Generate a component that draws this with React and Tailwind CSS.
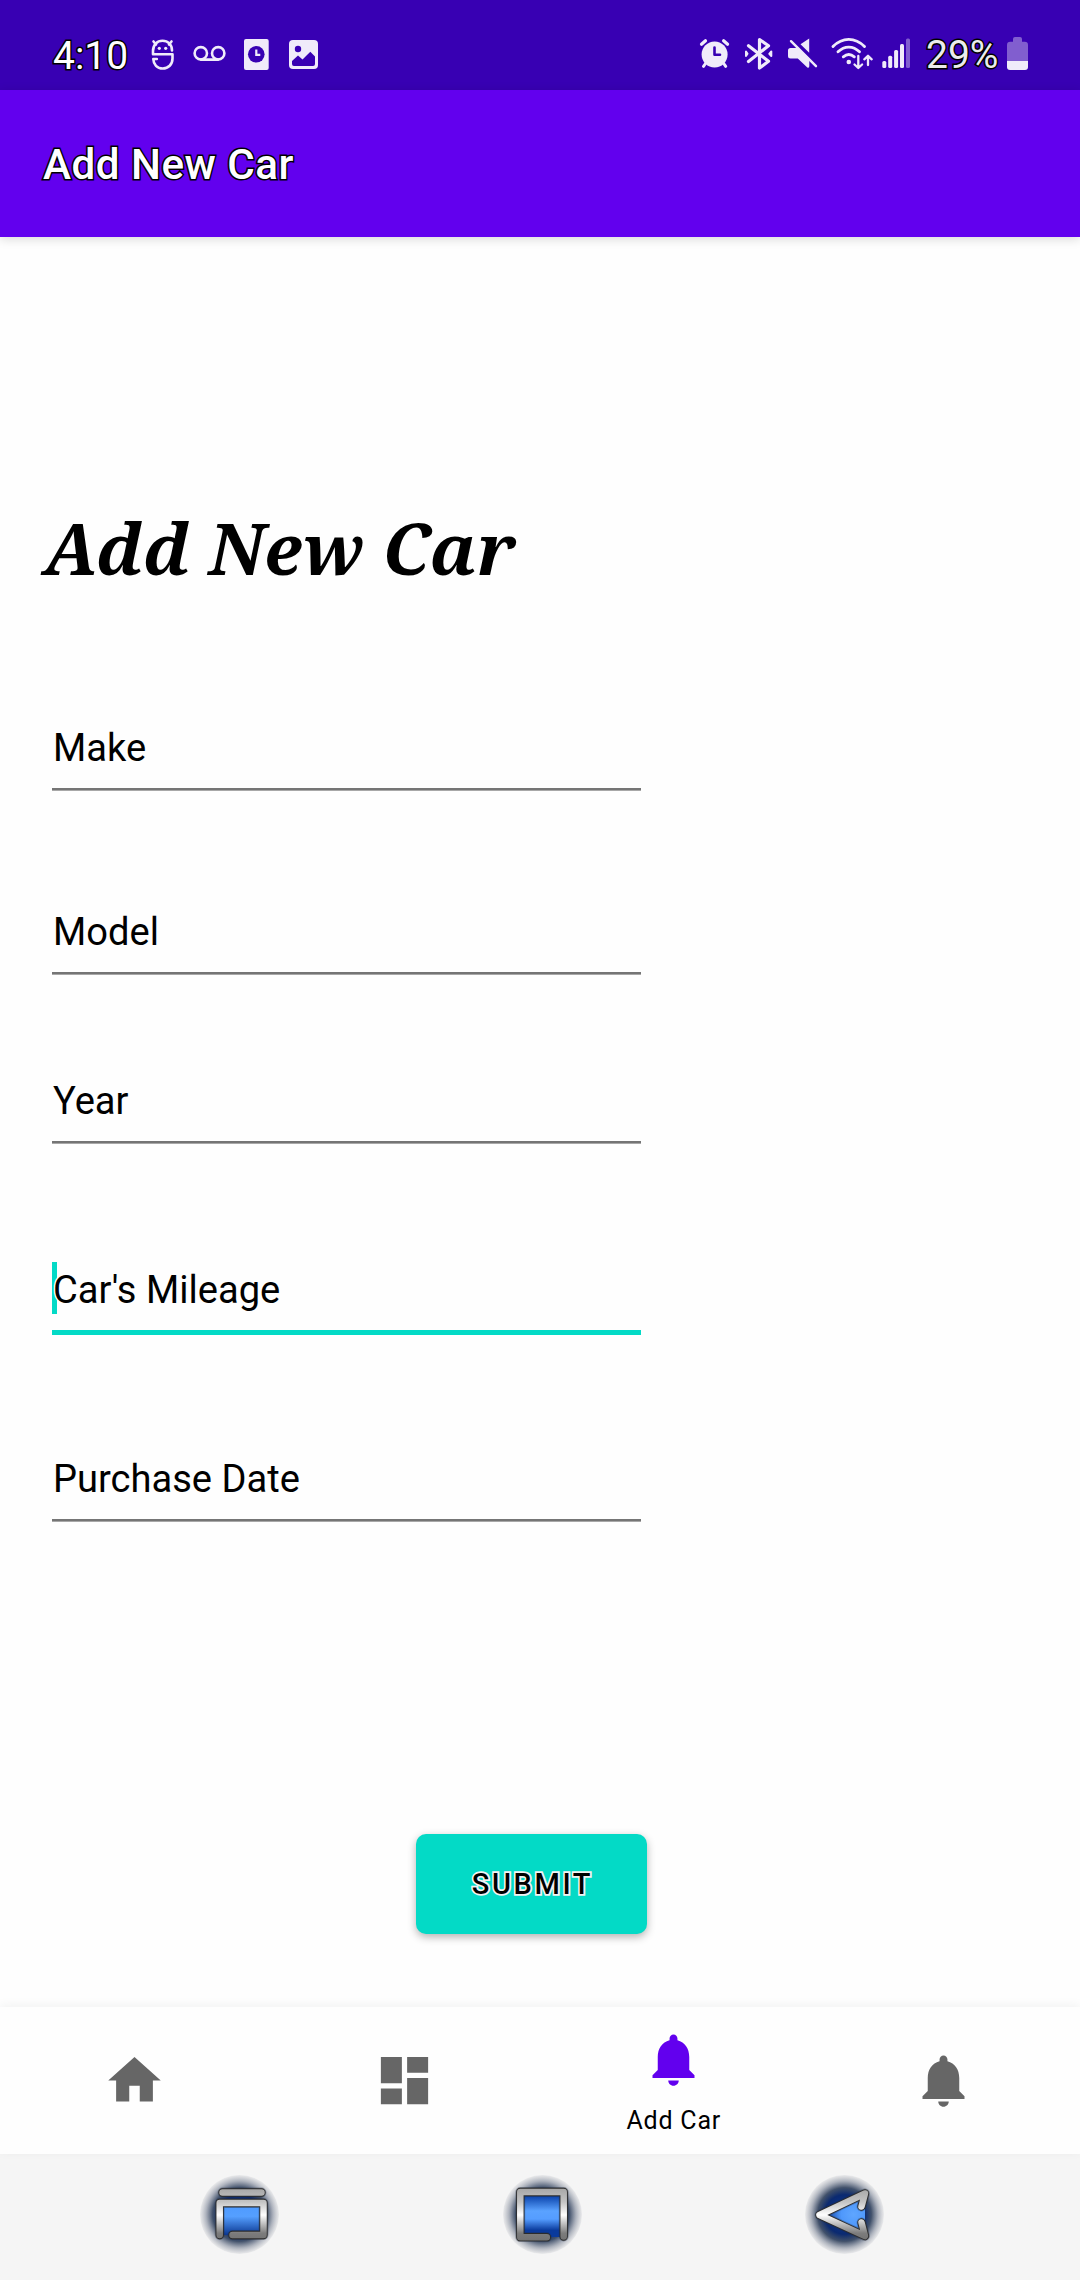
import React from "react";

const INK = "#f0ebfa";
const BAR = "#3800b3";

/* Status icons share the bar's 90px height; each cell shows its own slice of it. */
function Cell({ x, w, className = "", children }) {
  return (
    <svg
      className={"block h-[90px] shrink-0 " + className}
      width={w}
      height="90"
      viewBox={`${x} 0 ${w} 90`}
      fill="none"
      stroke={INK}
      strokeLinecap="round"
      strokeLinejoin="round"
    >
      {children}
    </svg>
  );
}

function StatusBar() {
  return (
    <header className="flex h-[90px] bg-[#3800b3]">
      <span className="ml-[53px] w-[97px] pt-[33px] text-[39px] leading-[46px] text-white [paint-order:stroke_fill] [-webkit-text-stroke:3px_#000]">
        4:10
      </span>
      <Cell x={150} w={34}>
        <path d="M172 50.500C172 44.500 168 40.700 162.500 40.700S153 45 153 51v3.300h19.500V58.500c0 6-4.200 10-9.800 10s-9.200-4-9.400-9.500h3.500" strokeWidth="2.600" />
        <path d="M153.500 41.500l2.500 3M171.500 41.500l-2.500 3" strokeWidth="2.600" />
        <circle cx="159.300" cy="48.300" r="1.600" fill={INK} stroke="none" />
        <circle cx="165.700" cy="48.300" r="1.600" fill={INK} stroke="none" />
      </Cell>
      <Cell x={184} w={54}>
        <circle cx="200.800" cy="53.300" r="6.200" strokeWidth="2.600" />
        <circle cx="218.200" cy="53.300" r="6.200" strokeWidth="2.600" />
        <path d="M200.800 59.600h17.400" strokeWidth="2.600" />
      </Cell>
      <Cell x={238} w={40}>
        <rect x="244" y="39" width="24.700" height="31" rx="2" fill={INK} stroke="none" />
        <circle cx="256.300" cy="54.300" r="8.300" fill={BAR} stroke="none" />
        <path d="M256.300 49.500v5.300h4" strokeWidth="2.200" strokeLinecap="butt" strokeLinejoin="miter" />
      </Cell>
      <Cell x={278} w={50}>
        <rect x="289" y="40" width="29" height="29" rx="4" fill={INK} stroke="none" />
        <circle cx="298" cy="49" r="3.200" fill={BAR} stroke="none" />
        <path d="M292 64v-3l6-5.500 4.500 4 7.800-7.800 4.700 4.800V64q0 2-2 2h-19q-2 0-2-2z" fill={BAR} stroke="none" />
      </Cell>

      <Cell x={692} w={44} className="ml-auto">
        <circle cx="714.600" cy="54.500" r="13" fill={INK} stroke="none" />
        <path d="M701.500 44.200l4-3.500M727.600 44.200l-4-3.500" strokeWidth="3.200" />
        <path d="M705.500 63.500l-2 2.800M723.700 63.500l2 2.800" strokeWidth="3" />
        <path d="M714.500 47.500v7.300h5.500" stroke={BAR} strokeWidth="2.600" />
      </Cell>
      <Cell x={736} w={44}>
        <path d="M748.500 45.800l20 15.500-9 6.700V39.500l9 6.300-20 15.700" strokeWidth="3.200" />
        <path d="M746 51.500v4.500l1.500-2.200zM771.300 51.500v4.500l-2-2.200z" fill={INK} strokeWidth="2" />
      </Cell>
      <Cell x={780} w={46}>
        <path d="M809.200 38.500v14.300l-8.700-8.500zM790.500 48h2.500l5.500 0 10.800 10.500V66q0 2.500-2 1.500l-9.500-9H790.500q-2.500 0-2.500-2.500v-5.500q0-2.500 2.500-2.500z" fill={INK} stroke="none" />
        <path d="M791 41.200l25 25" strokeWidth="2.400" />
      </Cell>
      <Cell x={826} w={52}>
        <path d="M833 46.500c9.500-9.500 22-9.500 31.500 0M838 51.800c6.500-6.300 15-6.300 21.500 0M843.300 56.800c3.500-2.800 7.500-2.800 11 0" strokeWidth="2.900" />
        <circle cx="848.800" cy="62" r="2.300" fill={INK} stroke="none" />
        <path d="M858.300 56v11.500M854.500 64.500l3.800 3.500 3.800-3.500M868 65V56M864.300 59.300l3.700-3.500 3.700 3.500" strokeWidth="2.300" />
      </Cell>
      <Cell x={878} w={40}>
        <g fill={INK} stroke="none">
          <rect x="882.300" y="61" width="4" height="7" rx="1.500" />
          <rect x="888.200" y="55.800" width="4" height="12.200" rx="1.500" />
          <rect x="894.100" y="50" width="4" height="18" rx="1.500" />
          <rect x="900" y="44" width="4" height="24" rx="1.500" />
          <rect x="906" y="38.500" width="4" height="29.500" rx="1.500" opacity=".4" />
        </g>
      </Cell>
      <span className="w-[82px] pl-[8px] pt-[33px] text-[39px] leading-[45px] text-[#ececec] [paint-order:stroke_fill] [-webkit-text-stroke:3px_#000]">
        29%
      </span>
      <Cell x={1000} w={80}>
        <g fill={INK} stroke="none">
          <path opacity=".4" d="M1007 61V45q0-3.300 3.300-3.300h2.700V39q0-2 2-2h5q2 0 2 2v2.700h2.700q3.300 0 3.300 3.300v16z" />
          <path d="M1007 61h21v6q0 3-3 3h-15q-3 0-3-3z" />
        </g>
      </Cell>
    </header>
  );
}

const FIELDS = [
  { label: "Make", space: "mt-[105px]" },
  { label: "Model", space: "mt-[118px]" },
  { label: "Year", space: "mt-[103px]" },
  { label: "Car's Mileage", space: "mt-[123px]", focused: true },
  { label: "Purchase Date", space: "mt-[121px]" },
];

function Field({ label, space, focused }) {
  return (
    <div className={"relative w-[589px] " + space}>
      {focused && <span className="absolute left-0 top-[-5px] h-[52px] w-[5px] bg-[#03dac6]" />}
      <div className="relative h-[63px] pl-px text-[38.1px] leading-[46px] text-black [paint-order:stroke_fill] [-webkit-text-stroke:3px_#fefefe]">
        {label}
      </div>
      {focused ? (
        <div className="h-[5px] bg-[#03dac6]" />
      ) : (
        <div className="h-[3px] border-b border-[#a8a8a8] bg-[#757575]" />
      )}
    </div>
  );
}

function Bell() {
  return (
    <path d="M12 22c1.100 0 2-.9 2-2h-4c0 1.100.89 2 2 2zm6-6v-5c0-3.070-1.640-5.640-4.500-6.320V4c0-.83-.67-1.500-1.500-1.500s-1.500.67-1.500 1.500v.68C7.630 5.360 6 7.920 6 11v5l-2 2v1h16v-1l-2-2z" />
  );
}

function Tab({ children, label }) {
  return (
    <div className={"flex flex-1 flex-col items-center " + (label ? "pt-[20.5px] text-[#6200ee]" : "pt-[42px] text-[#666]")}>
      <svg width="63" height="63" viewBox="0 0 24 24" fill="currentColor">{children}</svg>
      {label && <span className="mt-[15px] text-[25px] leading-[30px] tracking-[0.8px] text-black">{label}</span>}
    </div>
  );
}

function BottomNav() {
  return (
    <nav className="relative flex h-[147px] bg-[#fefefe] pr-[2px] shadow-[0_-2px_10px_rgba(0,0,0,0.05)]">
      <Tab><path d="M10 20v-6h4v6h5v-8h3L12 3 2 12h3v8z" /></Tab>
      <Tab><path d="M3 13h8V3H3v10zm0 8h8v-6H3v6zm10 0h8V11h-8v10zm0-18v6h8V3h-8z" /></Tab>
      <Tab label="Add Car"><Bell /></Tab>
      <Tab><Bell /></Tab>
    </nav>
  );
}

/* Chrome outline drawn over a glowing blue disc. */
function Orb({ id, fill, d, glow }) {
  return (
    <svg width="79" height="79" viewBox="0 0 79 79" fill="none" strokeLinecap="round" strokeLinejoin="round">
      <defs>
        <radialGradient id={id + "-halo"}>
          <stop offset="0" stopColor="#0a3a9c" />
          <stop offset=".5" stopColor="#0b2a70" />
          <stop offset=".68" stopColor="#142848" stopOpacity=".8" />
          <stop offset=".85" stopColor="#2b3a58" stopOpacity=".35" />
          <stop offset="1" stopColor="#50586c" stopOpacity=".07" />
        </radialGradient>
        <linearGradient id={id + "-chrome"} gradientUnits="userSpaceOnUse" x1="0" y1="14" x2="0" y2="66">
          <stop offset="0" stopColor="#a8a8a8" />
          <stop offset=".25" stopColor="#c4c4c4" />
          <stop offset=".5" stopColor="#ffffff" />
          <stop offset=".85" stopColor="#7c7c7c" />
          <stop offset="1" stopColor="#727272" />
        </linearGradient>
        {glow}
      </defs>
      <circle cx="39.500" cy="39.500" r="39.500" fill={`url(#${id}-halo)`} />
      <path d={fill} fill={`url(#${id}-glow)`} />
      <path d={d} stroke="#222c3c" strokeOpacity=".35" strokeWidth="9.800" />
      <path d={d} stroke="#2c2c2c" strokeWidth="8.300" />
      <path d={d} stroke={`url(#${id}-chrome)`} strokeWidth="6.500" />
    </svg>
  );
}

function SystemBar() {
  return (
    <footer className="flex h-[126px] gap-[223.5px] bg-[#f5f5f5] pl-[200px] pt-[21px]">
      <Orb
        id="recents"
        fill="M20 28h44v32H20z"
        d="M22.500 17.500h39M19.700 60V28H63.500v32H32.500"
        glow={
          <linearGradient id="recents-glow" x1="0" y1="0" x2="0" y2="1">
            <stop offset=".1" stopColor="#4f9bff" />
            <stop offset=".42" stopColor="#559fff" />
            <stop offset="1" stopColor="#0a3690" />
          </linearGradient>
        }
      />
      <Orb
        id="home"
        fill="M17 17h44v45H17z"
        d="M60.700 61.500V17H17.300v45.200h26.500"
        glow={
          <linearGradient id="home-glow" x1="0" y1="0" x2="0" y2="1">
            <stop offset=".1" stopColor="#0d46ae" />
            <stop offset=".42" stopColor="#5aa2ff" />
            <stop offset=".6" stopColor="#559dff" />
            <stop offset=".85" stopColor="#0a3a9c" />
          </linearGradient>
        }
      />
      <Orb
        id="back"
        fill="M14 40L60 18V61z"
        d="M56.500 31.500L60 18.500 14.500 40 60 61 56.500 47.500"
        glow={
          <radialGradient id="back-glow" cx=".75" cy=".5" r=".6">
            <stop offset="0" stopColor="#5fa6ff" />
            <stop offset=".45" stopColor="#4f98fb" />
            <stop offset="1" stopColor="#0c3f9f" />
          </radialGradient>
        }
      />
    </footer>
  );
}

export default function App() {
  return (
    <div className="flex h-[2280px] w-[1080px] flex-col overflow-hidden bg-[#fefefe] font-[Roboto,sans-serif]">
      <StatusBar />
      <div className="relative h-[147px] bg-[#6200ee] pl-[43px] pt-[51px] text-[42.2px] font-medium leading-[48px] tracking-[0.5px] text-white shadow-[0_2px_10px_rgba(0,0,0,0.15)]">
        <span className="[paint-order:stroke_fill] [-webkit-text-stroke:3px_#000]">Add New Car</span>
      </div>
      <main className="flex h-[1770px] flex-col pl-[52px]">
        <h1 className="ml-[-8px] mt-[263px] h-[92px] whitespace-nowrap font-['Noto_Serif','DejaVu_Serif',serif] text-[70.8px] font-bold italic leading-[96px] text-black">
          Add New Car
        </h1>
        <form className="flex flex-col pt-[28px]">
          {FIELDS.map((f) => (
            <Field key={f.label} {...f} />
          ))}
        </form>
        <button
          type="button"
          className="ml-[364px] mt-[312px] h-[100px] w-[231px] rounded-[10px] bg-[#03dac6] pl-[2px] pt-[2px] text-[29px] font-medium tracking-[2.6px] text-black shadow-[0_3px_8px_rgba(0,0,0,0.3)] [paint-order:stroke_fill] [-webkit-text-stroke:3.5px_#f2f2f2]"
        >
          SUBMIT
        </button>
      </main>
      <BottomNav />
      <SystemBar />
    </div>
  );
}
